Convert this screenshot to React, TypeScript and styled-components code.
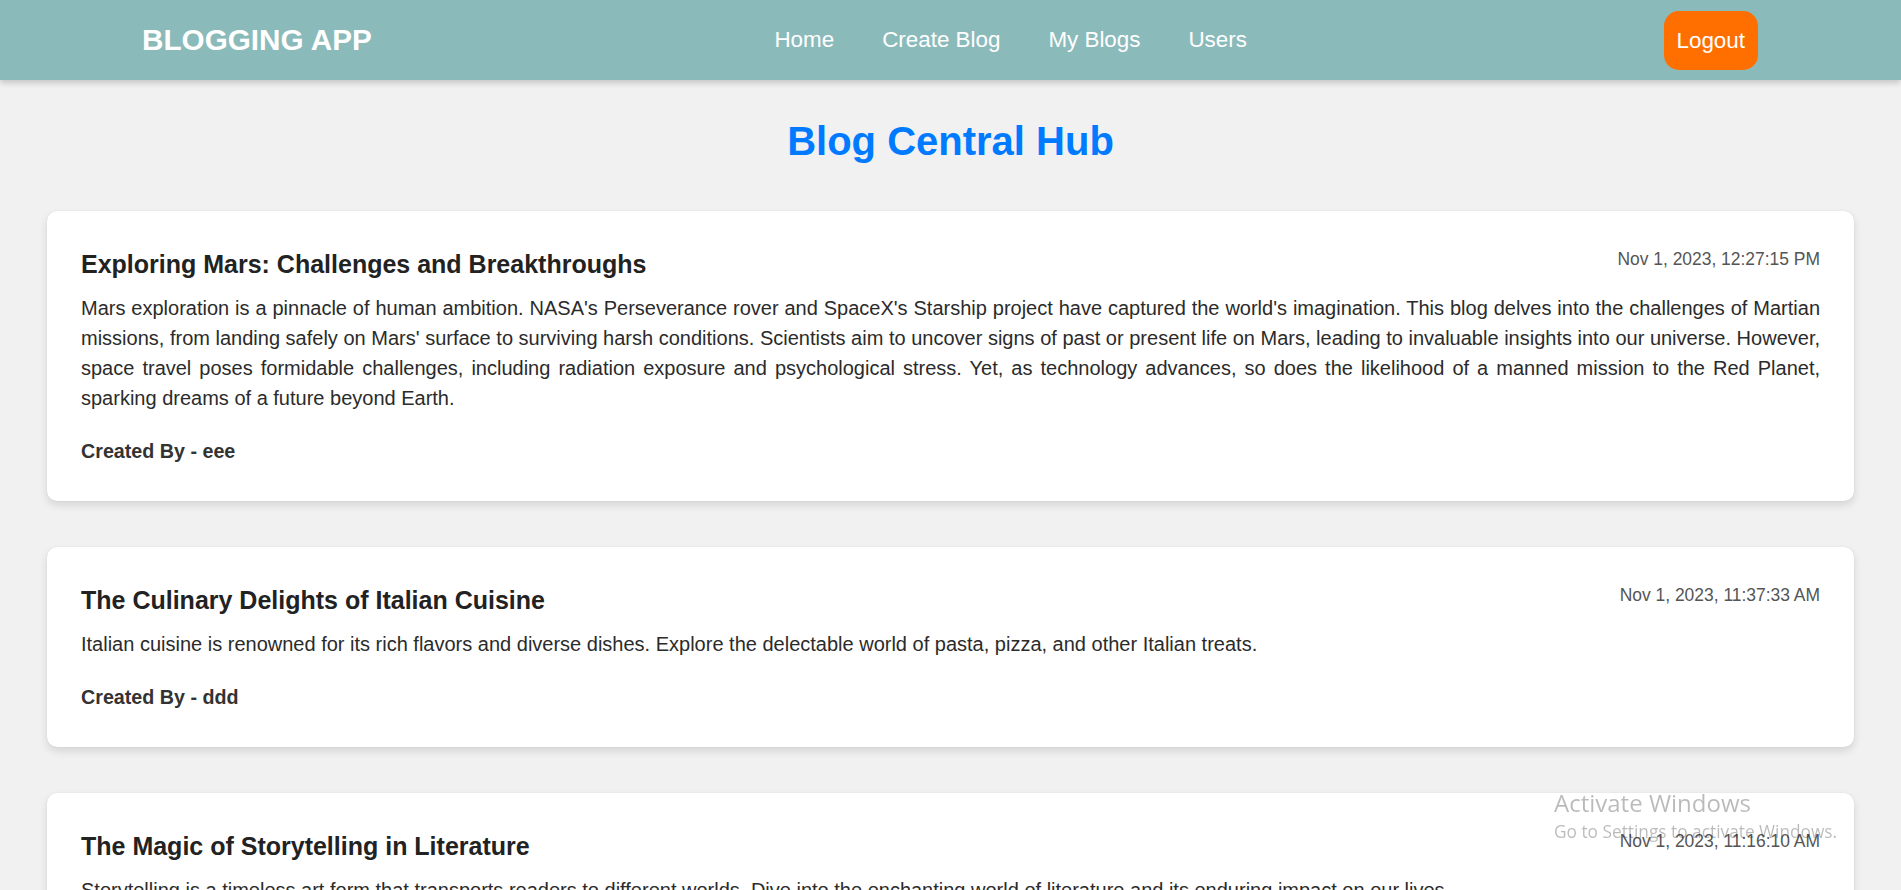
import React from "react";
import styled, { createGlobalStyle } from "styled-components";

const GlobalStyle = createGlobalStyle`
  html { scrollbar-width: none; }
  html::-webkit-scrollbar { display: none; }
  body {
    margin: 0;
    background: #f1f1f1;
    font-family: "Liberation Sans", Arial, sans-serif;
  }
`;

const Header = styled.header`
  height: 80px;
  background: #8bbaba;
  display: flex;
  align-items: center;
  justify-content: space-between;
  padding: 0 143px 0 142px;
  box-shadow: 0 3px 6px rgba(0, 0, 0, 0.18);
`;

const Brand = styled.div`
  color: #fff;
  font-weight: 700;
  font-size: 29.7px;
`;

const Nav = styled.nav`
  display: flex;
  gap: 48px;
  padding-right: 14px;
`;

const NavLink = styled.a`
  color: #fff;
  font-size: 22.4px;
  text-decoration: none;
`;

const LogoutButton = styled.button`
  background: #ff6f00;
  color: #fff;
  border: none;
  border-radius: 15px;
  font-family: "Liberation Sans", Arial, sans-serif;
  font-size: 22.4px;
  line-height: 25px;
  padding: 17px 13px;
`;

const Title = styled.h1`
  margin: 39px 0 47px;
  text-align: center;
  color: #007bff;
  font-size: 40px;
  font-weight: 700;
`;

const List = styled.main`
  display: flex;
  flex-direction: column;
  align-items: center;
  gap: 46px;
`;

const Card = styled.article`
  width: calc(100% - 94px);
  box-sizing: border-box;
  background: #fff;
  border-radius: 10px;
  box-shadow: 0 0 1px rgba(0, 0, 0, 0.12), 0 4px 9px rgba(0, 0, 0, 0.12);
  padding: 38px 34px 38px 34px;
`;

const CardHead = styled.div`
  display: flex;
  justify-content: space-between;
  align-items: flex-start;
`;

const CardTitle = styled.h2`
  margin: 1px 0 0;
  font-size: 25px;
  font-weight: 700;
  color: #222;
`;

const CardDate = styled.span`
  font-size: 17.45px;
  color: #555;
`;

const CardBody = styled.p`
  margin: 14px 0 0;
  font-size: 20px;
  line-height: 30px;
  color: #2b2b2b;
  text-align: justify;
`;

const Author = styled.div`
  margin-top: 27px;
  font-size: 19.7px;
  font-weight: 700;
  color: #333;
`;

const Watermark = styled.div`
  position: fixed;
  left: 1554px;
  top: 786px;
  color: rgba(0, 0, 0, 0.27);
  font-family: "Open Sans", "Noto Sans", sans-serif;
  pointer-events: none;
`;

const WatermarkTitle = styled.div`
  font-size: 24px;
  line-height: 34px;
`;

const WatermarkSub = styled.div`
  font-size: 17.3px;
  line-height: 24px;
`;

const blogs = [
  {
    title: "Exploring Mars: Challenges and Breakthroughs",
    date: "Nov 1, 2023, 12:27:15 PM",
    body:
      "Mars exploration is a pinnacle of human ambition. NASA's Perseverance rover and SpaceX's Starship project have captured the world's imagination. This blog delves into the challenges of Martian missions, from landing safely on Mars' surface to surviving harsh conditions. Scientists aim to uncover signs of past or present life on Mars, leading to invaluable insights into our universe. However, space travel poses formidable challenges, including radiation exposure and psychological stress. Yet, as technology advances, so does the likelihood of a manned mission to the Red Planet, sparking dreams of a future beyond Earth.",
    author: "eee",
  },
  {
    title: "The Culinary Delights of Italian Cuisine",
    date: "Nov 1, 2023, 11:37:33 AM",
    body:
      "Italian cuisine is renowned for its rich flavors and diverse dishes. Explore the delectable world of pasta, pizza, and other Italian treats.",
    author: "ddd",
  },
  {
    title: "The Magic of Storytelling in Literature",
    date: "Nov 1, 2023, 11:16:10 AM",
    body:
      "Storytelling is a timeless art form that transports readers to different worlds. Dive into the enchanting world of literature and its enduring impact on our lives.",
    author: "ccc",
  },
];

export default function App() {
  return (
    <>
      <GlobalStyle />
      <Header>
        <Brand>BLOGGING APP</Brand>
        <Nav>
          <NavLink href="#">Home</NavLink>
          <NavLink href="#">Create Blog</NavLink>
          <NavLink href="#">My Blogs</NavLink>
          <NavLink href="#">Users</NavLink>
        </Nav>
        <LogoutButton>Logout</LogoutButton>
      </Header>
      <Title>Blog Central Hub</Title>
      <List>
        {blogs.map((b) => (
          <Card key={b.title}>
            <CardHead>
              <CardTitle>{b.title}</CardTitle>
              <CardDate>{b.date}</CardDate>
            </CardHead>
            <CardBody>{b.body}</CardBody>
            <Author>Created By - {b.author}</Author>
          </Card>
        ))}
      </List>
      <Watermark>
        <WatermarkTitle>Activate Windows</WatermarkTitle>
        <WatermarkSub>Go to Settings to activate Windows.</WatermarkSub>
      </Watermark>
    </>
  );
}
